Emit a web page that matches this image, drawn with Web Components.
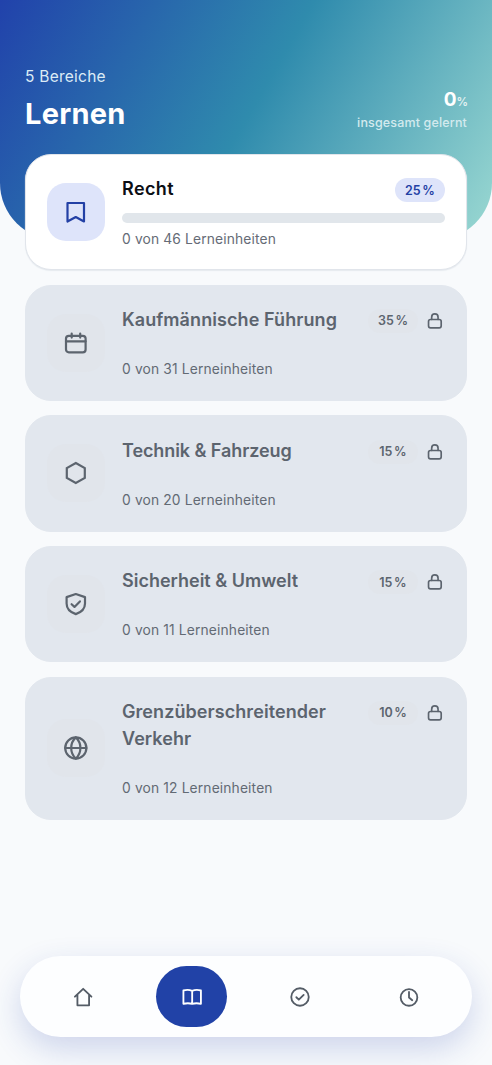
<!DOCTYPE html>
<html lang="de">
<head>
<meta charset="utf-8">
<title>Lernen</title>
<style>
html,body{margin:0;height:100%}
body{font-family:Inter,"Liberation Sans",sans-serif;background:#f8fafc;overflow:hidden}
</style>
</head>
<body>
<learn-app></learn-app>
<script>
const ICONS={
bookmark:'<path d="M3.500 3h16.500v18.500L11.750 17 3.500 21.500z"/>',
calendar:'<rect x="2" y="4.800" width="19.600" height="16.600" rx="2.800"/><path d="M2 10.300h19.600M7.700 2.600v4M16.200 2.600v4"/>',
hexagon:'<path stroke-linejoin="miter" d="M11.800 2l9 5.100v9.800l-9 5.100-9-5.100V7.100z"/>',
shield:'<path d="M11.800 2l9.200 3.100v6.400c0 5-3.700 8.800-9.200 10.600-5.500-1.800-9.200-5.600-9.200-10.600V5.100z"/><path d="M7.600 12.200l2.900 2.700 5.400-5.500"/>',
globe:'<circle cx="11.800" cy="12" r="10.600"/><path d="M1.200 12h21.200M11.800 1.400c3.200 3 4.600 6.600 4.600 10.600s-1.400 7.600-4.600 10.600M11.800 1.400C8.600 4.400 7.200 8 7.200 12s1.400 7.600 4.600 10.600"/>',
lock:'<rect x="2.300" y="9.800" width="19" height="12.400" rx="3"/><path d="M7 9.800V6.200a4.800 4.800 0 0 1 9.600 0v3.600"/>',
home:'<path d="M2.300 11.600L12.200 2.200l9.900 9.400M5.300 9.200V22h14V9.200"/>',
book:'<path d="M1.700 4.200C5 3.200 9 3.200 12.200 4.700c3.200-1.500 7.200-1.500 10.500-.5v16C19.400 19.300 15.400 19.300 12.200 20.200 9 19.300 5 19.300 1.700 20.200zM12.200 4.700v15.500"/>',
check:'<circle cx="12" cy="12" r="10.500"/><path d="M7.600 12.300l3 2.900 5.800-5.700"/>',
clock:'<circle cx="12" cy="12.500" r="10"/><path d="M12 5.900v6.700l3.900 3.300"/>'
};
const define=(name,render)=>customElements.define(name,class extends HTMLElement{
  connectedCallback(){
    if(this.shadowRoot)return;
    this.attachShadow({mode:'open'}).innerHTML=render(this);
  }
});
define('ui-icon',el=>`<style>:host{display:block;width:24px;height:24px;flex:none}svg{display:block;width:100%;height:100%;fill:none;stroke:currentColor;stroke-width:var(--stroke,2.200);stroke-linecap:round;stroke-linejoin:round}</style><svg viewBox="0 0 24 24">${ICONS[el.getAttribute('name')]}</svg>`);
define('page-header',()=>`<style>
:host{display:flex;box-sizing:border-box;height:240px;padding:66px 25px 0;justify-content:space-between;color:#fff;border-radius:0 0 57px 57px;background:linear-gradient(120deg,#2142ab 0%,#2f8bad 50%,#9bd9d2 100%)}
.sub{font-size:15.500px;line-height:22px;color:#dcebf6;letter-spacing:.250px}
h1{margin:8px 0 0;font-size:29px;line-height:36px;font-weight:700;letter-spacing:.250px}
.total{padding-top:22px;text-align:right}
.num{font-size:19px;line-height:24px;font-weight:700}
.num small{font-size:11.500px;font-weight:600;color:#e2f1f2;letter-spacing:-1px}
.label{font-size:12.500px;line-height:18px;margin-top:0;color:#d3eaee;letter-spacing:.15px;font-weight:500}
</style><div><div class="sub">5 Bereiche</div><h1>Lernen</h1></div><div class="total"><div class="num">0<small>%</small></div><div class="label">insgesamt gelernt</div></div>`);
define('weight-pill',()=>`<style>:host{display:flex;box-sizing:border-box;width:50px;height:24px;align-items:center;justify-content:center;border-radius:12px;background:var(--tint);color:var(--accent);font-size:12.500px;font-weight:600;flex:none;white-space:nowrap;word-spacing:-1.500px}</style><slot></slot>`);
define('area-card',el=>{
const locked=el.hasAttribute('locked');
return `<style>
:host{display:flex;box-sizing:border-box;align-items:center;gap:17px;min-height:116.200px;padding:20px 21px;border:1px solid #e1e5eb;border-radius:26px;background:#fff;box-shadow:0 1px 1px #e6eaef;--tint:#dee4fa;--accent:#2340a5;color:#0b0e14}
:host([locked]){background:#e2e7ee;border-color:#e2e7ee;box-shadow:none;--tint:#e1e5eb;--accent:#5c646e;color:#5c646e}
.icon{display:grid;place-items:center;width:58px;height:58px;border-radius:19px;background:var(--tint);color:var(--accent);flex:none}
.body{flex:1;min-width:0}
.row{display:flex;align-items:flex-start;justify-content:space-between;height:var(--title-height,27.400px)}
h2{margin:0;font-size:18px;line-height:27.400px;font-weight:600;letter-spacing:var(--tracking,0)}
.meta{display:flex;align-items:center;margin-top:3px;height:24px;color:var(--accent);gap:9px}
:host([locked]) .meta{margin-right:2px}
.meta ui-icon{width:16px;height:16px;--stroke:2.500}
.bar{height:10px;border-radius:5px;background:${locked?'transparent':'#e1e6eb'};margin-top:10.600px}
.count{font-size:13.800px;line-height:20.800px;margin-top:5px;color:#656b76;letter-spacing:.150px}
:host(:not([locked])) .count{padding-top:.8px;margin-bottom:-.8px}
:host([locked]) .count{color:#626a74}
</style><div class="icon"><ui-icon name="${el.getAttribute('icon')}"></ui-icon></div><div class="body"><div class="row"><h2><slot></slot></h2><div class="meta"><weight-pill>${el.getAttribute('weight')} %</weight-pill>${locked?'<ui-icon name="lock"></ui-icon>':''}</div></div><div class="bar"></div><div class="count">0 von ${el.getAttribute('units')} Lerneinheiten</div></div>`});
define('nav-item',el=>`<style>:host{display:grid;place-items:center;width:71px;height:61px;justify-self:center;border-radius:30.500px;color:#545c66;--stroke:2.200}:host([active]){background:#2142a7;color:#fff}ui-icon{width:20px;height:20px}</style><ui-icon name="${el.getAttribute('icon')}"></ui-icon>`);
define('tab-bar',()=>`<style>:host{display:grid;grid-template-columns:repeat(4,1fr);align-items:center;box-sizing:border-box;height:81px;padding:0 9px;border-radius:40.500px;background:#fdfeff;box-shadow:0 12px 32px rgba(33,66,171,.2)}</style><slot></slot>`);
define('learn-app',()=>`<style>
:host{display:flex;flex-direction:column;box-sizing:border-box;height:1065px;width:492px}
main{display:flex;flex-direction:column;gap:14.400px;margin:-85.800px 25px 0}
.law{--tracking:.400px}
.business{--tracking:.080px}
.tech{--tracking:-.080px}
.tall{min-height:143.600px;--title-height:54.800px;--tracking:.070px}
tab-bar{margin:auto 20px 28px}
</style>
<page-header></page-header>
<main>
<area-card class="law" icon="bookmark" weight="25" units="46">Recht</area-card>
<area-card locked class="business" icon="calendar" weight="35" units="31">Kaufmännische Führung</area-card>
<area-card locked class="tech" icon="hexagon" weight="15" units="20">Technik &amp; Fahrzeug</area-card>
<area-card locked icon="shield" weight="15" units="11">Sicherheit &amp; Umwelt</area-card>
<area-card locked class="tall" icon="globe" weight="10" units="12">Grenzüberschreitender<br>Verkehr</area-card>
</main>
<tab-bar><nav-item icon="home"></nav-item><nav-item active icon="book"></nav-item><nav-item icon="check"></nav-item><nav-item icon="clock"></nav-item></tab-bar>`);
</script>
</body>
</html>
